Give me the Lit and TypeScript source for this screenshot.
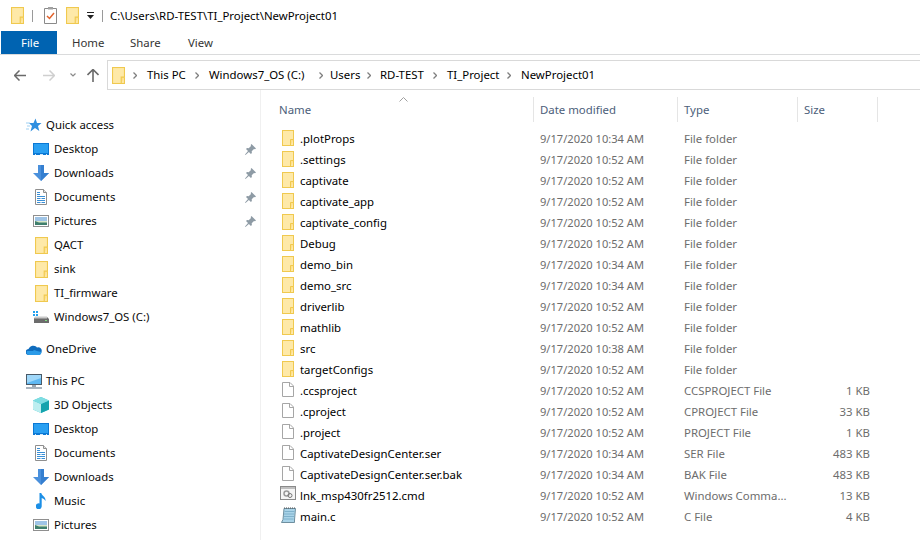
import { LitElement, html, css, svg } from "lit";
import { customElement } from "lit/decorators.js";

const folderShape = svg`<rect x=".5" y=".5" width="11" height="15" fill="#fee9a8" stroke="#f0c94f"/><path d="M8.500 15.500v-6h3" fill="#ffe08a" stroke="#f0c94f"/>`;
const folder = html`<svg class="ic" width="12" height="16" viewBox="0 0 12 16">${folderShape}</svg>`;
const folderLg = html`<svg class="ic" width="13" height="17" viewBox="0 0 12 16" preserveAspectRatio="none">${folderShape}</svg>`;
const blank = html`<svg class="ic" width="12" height="15" viewBox="0 0 12 15"><path d="M.5.5h7.500l3.500 3.500v10.500h-11z" fill="#fff" stroke="#a6a6a6"/><path d="M7.500.5v4h4" fill="none" stroke="#a6a6a6"/></svg>`;
const cmd = html`<svg class="ic wide cmd" width="16" height="14" viewBox="0 0 16 14"><rect x=".5" y=".5" width="15" height="13" fill="#f5f5f5" stroke="#8a8a8a"/><rect x="1" y="1" width="14" height="2" fill="#bfbfbf"/><circle cx="6.500" cy="7.500" r="2.500" fill="none" stroke="#9a9a9a" stroke-width="1.500"/><circle cx="10" cy="9.500" r="2" fill="none" stroke="#777"/></svg>`;
const cfile = html`<svg class="ic wide cf" width="15" height="16" viewBox="0 0 15 16"><path d="M3 1.500h11.500l-1 11.500v2.500h-13l1.500-3z" fill="#a9d3e8" stroke="#6f8f9f"/><path d="M3.500 4.500h10M3 7h10M3 9.500h10M2.500 12h10" stroke="#7fb2cc"/><path d="M3 1h11" stroke="#555" stroke-dasharray="1 1"/></svg>`;

const star = html`<svg width="16" height="15" viewBox="0 0 16 15"><path d="M9.500.500l1.500 4.500h4.500l-3.500 3 1.300 5-4.300-3-4.500 3.500 1.500-5.500-3-3h4.500z" fill="#2f8fe0"/><path d="M0 5h4M1 8h3M0 11h3" stroke="#9fd0f2"/></svg>`;
const desktop = html`<svg width="16" height="12" viewBox="0 0 16 12"><rect width="16" height="12" fill="#0b78d4"/><rect x="1" y="1" width="14" height="9" fill="#2aa0f2"/><rect x="2" y="11" width="1" height="1" fill="#cfe8fb"/><rect x="7" y="11" width="3" height="1" fill="#cfe8fb"/><rect x="13" y="11" width="1" height="1" fill="#cfe8fb"/></svg>`;
const downloads = html`<svg width="16" height="16" viewBox="0 0 16 16"><path d="M5 0h6v8h5l-8 8-8-8h5z" fill="#4a90dc"/><path d="M8 0h3v8h5l-8 8z" fill="#357fd0"/></svg>`;
const documents = html`<svg width="12" height="16" viewBox="0 0 12 16"><path d="M.5.500h8l3 3v12h-11z" fill="#fff" stroke="#8f8f8f"/><path d="M8.500.500v3h3" fill="#e4e4e4" stroke="#8f8f8f"/><path d="M2 3.500h3M2 5.500h3M2 7.500h8M2 9.500h3.500M6.500 9.500h3.500M2 11.500h8M2 13.500h3.500M6.500 13.500h3.500" stroke="#3a8fd6"/></svg>`;
const pictures = html`<svg width="16" height="12" viewBox="0 0 16 12"><rect x=".5" y=".5" width="15" height="11" fill="#fff" stroke="#8f8f8f"/><rect x="2" y="2" width="12" height="4" fill="#9fc4e6"/><path d="M2 6h12v4H2z" fill="#3f7f6d"/><path d="M2 6h12v1.500H6z" fill="#d8e6c8"/></svg>`;
const drive = html`<svg width="16" height="12" viewBox="0 0 16 12"><path d="M0 0h2v2H0zM3 0h2v2H3zM0 3h2v2H0zM3 3h2v2H3z" fill="#22a0ee"/><path d="M2 6h12l2 2v4H1V8z" fill="#6c6c6c"/><path d="M2 5.500h12v2H2z" fill="#c9c9c9"/><rect x="12" y="9" width="2" height="1" fill="#7fe07f"/></svg>`;
const onedrive = html`<svg width="16" height="11" viewBox="0 0 16 11"><path d="M3 11a3 3 0 0 1-.5-6A5 5 0 0 1 11 3.500 3.500 3.500 0 0 1 15.500 8 3 3 0 0 1 13 11z" fill="#0f6cbd"/><path d="M2 10.800A3 3 0 0 1 1 7h6l1-1 3 1 4.500 1A3 3 0 0 1 13 11H3z" fill="#2b9be8"/></svg>`;
const thispc = html`<svg width="16" height="15" viewBox="0 0 16 15"><rect x=".5" y=".5" width="15" height="10" fill="#5fb8f2" stroke="#4a5a68"/><path d="M1 1h14v3L1 9z" fill="#a0d8fa"/><rect x="6" y="11" width="4" height="2" fill="#9aa7b2"/><rect y="13" width="16" height="2" fill="#a9b4be"/></svg>`;
const objects = html`<svg width="16" height="16" viewBox="0 0 16 16"><path d="M8 0l8 3.500v9L8 16l-8-3.500v-9z" fill="#3ec6cf"/><path d="M0 3.500L8 7v9l-8-3.500z" fill="#bdeef0"/><path d="M8 7l8-3.500v9L8 16z" fill="#15a3ad"/><path d="M8 0l8 3.500L8 7 0 3.500z" fill="#7fdde2"/></svg>`;
const music = html`<svg width="11" height="16" viewBox="0 0 11 16"><path d="M3.500 0h1.800c.4 3 4.700 3.500 4.200 8-.8-1.500-2.200-2.700-3.800-3v8a3 3 0 1 1-2.200-2.600z" fill="#1c8fe6"/></svg>`;
const pin = html`<svg class="pin" width="11" height="11" viewBox="0 0 11 11"><path d="M6.500 0L11 4.500l-1 .8-1-.3-2.300 2.300.2 1.700-1 1-2-2L.500 11 0 10.500l3-3.400-2-2 1-1 1.700.2L6 2l-.3-1z" fill="#8e9ba5"/></svg>`;
const chev = html`<svg class="chev" width="4" height="7" viewBox="0 0 4 7"><path d="M.5.500l3 3-3 3" fill="none" stroke="#7f7f7f" stroke-width="1.300"/></svg>`;

type Nav = [any, string, boolean?];
const quick: Nav[] = [
  [desktop, "Desktop", true], [downloads, "Downloads", true], [documents, "Documents", true], [pictures, "Pictures", true],
  [folderLg, "QACT"], [folderLg, "sink"], [folderLg, "TI_firmware"], [drive, "Windows7_OS (C:)"],
];
const pc: Nav[] = [[objects, "3D Objects"], [desktop, "Desktop"], [documents, "Documents"], [downloads, "Downloads"], [music, "Music"], [pictures, "Pictures"]];

const D34 = "9/17/2020 10:34 AM", D52 = "9/17/2020 10:52 AM", D38 = "9/17/2020 10:38 AM";
const files: [any, string, string, string, string][] = [
  [folder, ".plotProps", D34, "File folder", ""],
  [folder, ".settings", D52, "File folder", ""],
  [folder, "captivate", D52, "File folder", ""],
  [folder, "captivate_app", D52, "File folder", ""],
  [folder, "captivate_config", D52, "File folder", ""],
  [folder, "Debug", D52, "File folder", ""],
  [folder, "demo_bin", D34, "File folder", ""],
  [folder, "demo_src", D34, "File folder", ""],
  [folder, "driverlib", D52, "File folder", ""],
  [folder, "mathlib", D52, "File folder", ""],
  [folder, "src", D38, "File folder", ""],
  [folder, "targetConfigs", D52, "File folder", ""],
  [blank, ".ccsproject", D52, "CCSPROJECT File", "1 KB"],
  [blank, ".cproject", D52, "CPROJECT File", "33 KB"],
  [blank, ".project", D52, "PROJECT File", "1 KB"],
  [blank, "CaptivateDesignCenter.ser", D34, "SER File", "483 KB"],
  [blank, "CaptivateDesignCenter.ser.bak", D34, "BAK File", "483 KB"],
  [cmd, "lnk_msp430fr2512.cmd", D52, "Windows Comma...", "13 KB"],
  [cfile, "main.c", D52, "C File", "4 KB"],
];
const crumbs = ["This PC", "Windows7_OS (C:)", "Users", "RD-TEST", "TI_Project", "NewProject01"];

@customElement("app-root")
export class AppRoot extends LitElement {
  static styles = css`
    :host { display: block; width: 920px; height: 540px; overflow: hidden; background: #fff; color: #000;
      font-family: "Noto Sans", sans-serif; font-size: 11.4px; line-height: 16px; }
    svg { display: block; flex: none; }
    .title { height: 31px; display: flex; align-items: center; padding-left: 11px; box-sizing: border-box; }
    .title .sep { width: 1px; height: 12px; background: #9a9a9a; }
    .s1 { margin: 0 11px 0 8px; }
    .s3 { margin: 0 7px 0 8px; }
    .doc { margin-right: 9px; }
    .drop { margin-left: 8px; }
    .tabs { height: 23px; display: flex; border-bottom: 1px solid #dadbdc; padding-left: 1px; }
    .tab { color: #353535; display: flex; align-items: center; width: 58px; padding-left: 15px; box-sizing: border-box; }
    .tab.file { background: #0063b1; color: #fff; width: 56px; padding-left: 20px; }
    .addr { height: 30px; margin-top: 5px; display: flex; align-items: center; }
    .btns { width: 107px; display: flex; align-items: center; padding-left: 14px; box-sizing: border-box; }
    .fwd { margin-left: 17px; }
    .dn { margin-left: 15px; }
    .up { margin-left: 11px; }
    .box { flex: 1; height: 30px; box-sizing: border-box; border: 1px solid #d9d9d9; border-right: 0;
      display: grid; align-items: center; padding-left: 4px;
      grid-template-columns: 21px 14px 48px 14px 110px 11px 37px 13px 53px 14px 60px 14px 1fr; }
    .box span { white-space: nowrap; }
    .body { display: flex; height: 450px; }
    .nav { width: 261px; flex: none; padding-top: 23px; box-sizing: border-box; border-right: 1px solid #f0f0f0; }
    .nrow { height: 24px; display: flex; align-items: center; position: relative; color: #0a0a0a; }
    .nic { width: 16px; display: flex; justify-content: center; flex: none; }
    .top { padding-left: 26px; gap: 4px; }
    .child { padding-left: 33px; gap: 5px; }
    .pin { position: absolute; left: 245px; top: 7px; }
    .gap { margin-top: 8px; }
    .main { flex: 1; position: relative; min-width: 0; }
    .caret { position: absolute; left: 138px; top: 7px; }
    .cols { display: grid; grid-template-columns: 273px 144px 120px 80px; }
    .head { height: 25px; margin-top: 7px; align-items: center; color: #4c607a; }
    .head > div { height: 25px; line-height: 25px; border-right: 1px solid #e5e5e5; padding-left: 6px; box-sizing: border-box; }
    .head > div:first-child { padding-left: 18px; }
    .rows { margin-top: 6px; }
    .row { height: 21px; align-items: center; color: #6d6d6d; }
    .row > div { padding-left: 6px; min-width: 0; white-space: nowrap; }
    .row .date { font-size: 11.1px; }
    .row .name { color: #000; display: flex; align-items: center; padding-left: 21px; gap: 6px; }
    .row .name .ic { margin-bottom: 2px; }
    .row .name .wide { margin-left: -2px; margin-right: -2px; }
    .row .name .cmd { margin-bottom: 5px; }
    .row .name .cf { margin-left: -1px; margin-bottom: 3px; }
    .row .size { text-align: right; padding: 0 8px 0 0; }
  `;

  private navRow(n: Nav, cls: string) {
    return html`<div class="nrow ${cls}"><span class="nic">${n[0]}</span><span>${n[1]}</span>${n[2] ? pin : ""}</div>`;
  }

  render() {
    return html`
      <div class="title">
        ${folderLg}<div class="sep s1"></div>
        <svg class="doc" width="13" height="17" viewBox="0 0 13 17"><path d="M.5 1.500h12v15H.5z" fill="#fff" stroke="#8a8a8a"/><path d="M4 0h5v2.500H4z" fill="#a0a0a0"/><path d="M3 9l2.500 2.500L10 6" fill="none" stroke="#e2622b" stroke-width="1.500"/></svg>
        ${folderLg}
        <svg class="drop" width="7" height="7" viewBox="0 0 7 7"><path d="M0 0h7v1H0z" fill="#222"/><path d="M0 3h7L3.500 7z" fill="#222"/></svg>
        <div class="sep s3"></div>
        <span>C:\\Users\\RD-TEST\\TI_Project\\NewProject01</span>
      </div>
      <div class="tabs">
        <div class="tab file">File</div>
        <div class="tab">Home</div><div class="tab">Share</div><div class="tab">View</div>
      </div>
      <div class="addr">
        <div class="btns">
          <svg width="12" height="11" viewBox="0 0 12 11"><path d="M5.500.500l-5 5 5 5M1 5.500h11" fill="none" stroke="#6a6a6a" stroke-width="1.500"/></svg>
          <svg class="fwd" width="12" height="11" viewBox="0 0 12 11"><path d="M6.500.500l5 5-5 5M11 5.500H0" fill="none" stroke="#cfcfcf" stroke-width="1.500"/></svg>
          <svg class="dn" width="6" height="4" viewBox="0 0 6 4"><path d="M.500.500L3 3 5.500.500" fill="none" stroke="#8a8a8a" stroke-width="1.200"/></svg>
          <svg class="up" width="12" height="13" viewBox="0 0 12 13"><path d="M.5 6l5.500-5.500L11.500 6M6 1v12" fill="none" stroke="#6a6a6a" stroke-width="1.600"/></svg>
        </div>
        <div class="box">
          <span>${folderLg}</span>
          ${crumbs.map((c) => html`${chev}<span>${c}</span>`)}
        </div>
      </div>
      <div class="body">
        <div class="nav">
          <div class="nrow top"><span class="nic">${star}</span><span>Quick access</span></div>
          ${quick.map((n) => this.navRow(n, "child"))}
          <div class="nrow top gap"><span class="nic">${onedrive}</span><span>OneDrive</span></div>
          <div class="nrow top gap"><span class="nic">${thispc}</span><span>This PC</span></div>
          ${pc.map((n) => this.navRow(n, "child"))}
        </div>
        <div class="main">
          <svg class="caret" width="9" height="5" viewBox="0 0 9 5"><path d="M.5 4.500l4-4 4 4" fill="none" stroke="#a0a0a0"/></svg>
          <div class="cols head"><div>Name</div><div>Date modified</div><div>Type</div><div>Size</div></div>
          <div class="rows">
            ${files.map((f) => html`<div class="cols row">
              <div class="name">${f[0]}<span>${f[1]}</span></div>
              <div class="date">${f[2]}</div><div>${f[3]}</div><div class="size">${f[4]}</div>
            </div>`)}
          </div>
        </div>
      </div>
    `;
  }
}
